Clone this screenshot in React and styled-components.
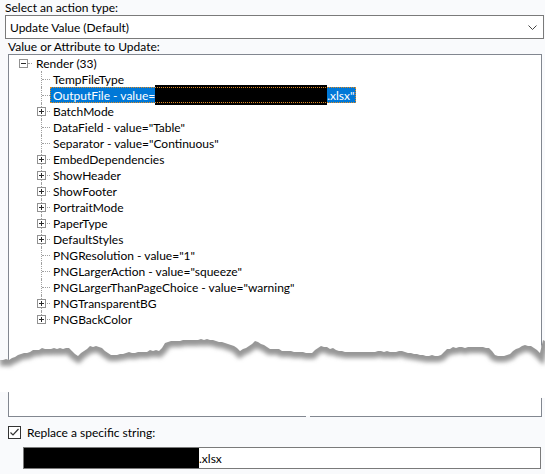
import React from 'react';
import styled, { createGlobalStyle } from 'styled-components';

const GlobalStyle = createGlobalStyle`
    html, body {
        margin: 0;
        padding: 0;
        background: #f9fafc;
    }
    body {
        font-family: Lato, "Noto Sans", sans-serif;
        font-size: 12px;
        color: #000;
    }
`;

const children = [
    { label: 'TempFileType' },
    { label: 'OutputFile - value=', selected: true, redacted: true },
    { label: 'BatchMode', expandable: true },
    { label: 'DataField - value="Table"' },
    { label: 'Separator - value="Continuous"' },
    { label: 'EmbedDependencies', expandable: true },
    { label: 'ShowHeader', expandable: true },
    { label: 'ShowFooter', expandable: true },
    { label: 'PortraitMode', expandable: true },
    { label: 'PaperType', expandable: true },
    { label: 'DefaultStyles', expandable: true },
    { label: 'PNGResolution - value="1"' },
    { label: 'PNGLargerAction - value="squeeze"' },
    { label: 'PNGLargerThanPageChoice - value="warning"' },
    { label: 'PNGTransparentBG', expandable: true },
    { label: 'PNGBackColor', expandable: true },
];

// rough outline of the torn edge, page coordinates
const tearKeys = [
    [0, 360], [10, 359], [25, 353], [40, 349], [70, 348], [77, 356], [90, 346],
    [100, 347], [110, 355], [130, 353], [160, 350], [167, 342], [200, 339],
    [229, 344], [240, 351], [257, 341], [271, 349], [312, 353], [320, 346],
    [347, 352], [365, 352], [400, 351], [420, 355], [440, 356], [448, 348],
    [470, 347], [490, 348], [495, 355], [505, 357], [515, 350], [525, 345],
    [535, 348], [540, 352], [542, 341], [545, 341],
];

const TEAR_TOP = 330;

const noise = x => {
    const s = Math.sin(x * 12.9898 + 4.1) * 43758.5453;
    return s - Math.floor(s);
};

const tearY = x => {
    for (let i = 0; i < tearKeys.length - 1; i++) {
        const [x0, y0] = tearKeys[i];
        const [x1, y1] = tearKeys[i + 1];
        if (x >= x0 && x <= x1) {
            const t = (x - x0) / (x1 - x0 || 1);
            return y0 + (y1 - y0) * t;
        }
    }
    return tearKeys[tearKeys.length - 1][1];
};

const buildEdge = () => {
    const pts = [];
    for (let x = 0; x <= 545; x += 3) {
        const y = Math.round(tearY(x) + (noise(x) - 0.5) * 1.6) - TEAR_TOP;
        pts.push(`${x},${y}`);
    }
    pts.push(`545,${tearY(545) - TEAR_TOP}`);
    return pts;
};

const edgePts = buildEdge();
const edgeLine = 'M' + edgePts.join(' L');
const tearShape = edgeLine + ' L545,68 L0,62 Z';

const Expander = ({ open }) => (
    <ExpanderBox width="9" height="9" viewBox="0 0 9 9">
        <rect x="0.5" y="0.5" width="8" height="8" fill="#fff" stroke="#919191" />
        <line x1="2" y1="4.5" x2="7" y2="4.5" stroke="#2b2b2b" />
        {!open && <line x1="4.5" y1="2" x2="4.5" y2="7" stroke="#2b2b2b" />}
    </ExpanderBox>
);

const Tear = () => (
    <TearArt width="545" height="75" viewBox="0 0 545 75">
        <defs>
            <clipPath id="tearClip">
                <path d={tearShape} />
            </clipPath>
            <filter id="tearBlur" filterUnits="userSpaceOnUse" x="-10" y="-10" width="565" height="95">
                <feGaussianBlur stdDeviation="2.2" />
            </filter>
        </defs>
        <path d={tearShape} fill="#fff" />
        <g clipPath="url(#tearClip)">
            <path d={edgeLine} fill="none" stroke="#979797" strokeWidth="12" filter="url(#tearBlur)" />
        </g>
    </TearArt>
);

const App = () => {
    return (
        <Page>
            <GlobalStyle />
            <Label>Select an action type:</Label>
            <Select>
                <span>Update Value (Default)</span>
                <svg width="9" height="6" viewBox="0 0 9 6">
                    <polyline points="0.5,0.5 4.5,4.5 8.5,0.5" fill="none" stroke="#444" />
                </svg>
            </Select>
            <Label $indent={8}>Value or Attribute to Update:</Label>
            <TreeBox>
                <RootRow>
                    <Expander open />
                    <RootStub />
                    <ItemText>Render (33)</ItemText>
                </RootRow>
                {children.map((c, i) => (
                    <ChildRow key={c.label}>
                        <Connector $last={i === children.length - 1}>
                            {c.expandable && <Expander />}
                        </Connector>
                        <ItemText $selected={c.selected}>
                            {c.label}
                            {c.redacted && (
                                <>
                                    <Redacted $width={172} />
                                    .xlsx"
                                </>
                            )}
                        </ItemText>
                    </ChildRow>
                ))}
                <BorderGap />
            </TreeBox>
            <CheckRow>
                <CheckBox width="13" height="13" viewBox="0 0 13 13">
                    <rect x="0.5" y="0.5" width="12" height="12" fill="#fff" stroke="#333" />
                    <polyline points="2.5,6.5 5,9 10.5,3" fill="none" stroke="#333" strokeWidth="1.2" />
                </CheckBox>
                <span>Replace a specific string:</span>
            </CheckRow>
            <TextInput>
                <Redacted $width={175} />
                <span>.xlsx</span>
            </TextInput>
            <Tear />
        </Page>
    );
};

const Page = styled.div`
    position: relative;
    width: 545px;
    height: 474px;
    overflow: hidden;
    display: flex;
    flex-direction: column;
`;

const Label = styled.div`
    height: 15px;
    line-height: 15px;
    padding-left: ${p => p.$indent || 5}px;
    white-space: nowrap;
`;

const Select = styled.div`
    box-sizing: border-box;
    margin-left: 5px;
    width: 539px;
    height: 24px;
    border: 1px solid #7a7a7a;
    background: #fff;
    display: flex;
    align-items: center;
    justify-content: space-between;
    padding: 0 6px 0 4px;

    svg {
        margin-top: 1px;
    }
`;

const TreeBox = styled.div`
    position: relative;
    box-sizing: border-box;
    margin-left: 8px;
    width: 534px;
    height: 363px;
    border: 1px solid #828790;
    background: #fff;
    display: flex;
    flex-direction: column;
`;

// small break in the bottom edge left by the cut
const BorderGap = styled.span`
    position: absolute;
    left: 297px;
    bottom: -1px;
    width: 4px;
    height: 1px;
    background: #f9fafc;
`;

const RootRow = styled.div`
    height: 16px;
    display: flex;
    align-items: center;
    padding-left: 10px;
`;

const RootStub = styled.span`
    width: 4px;
    height: 0;
    margin: 0 1px 0 0;
    border-top: 1px dotted #a0a0a0;
`;

const ChildRow = styled.div`
    height: 16px;
    display: flex;
    align-items: center;
    padding-left: 32px;
`;

const Connector = styled.span`
    position: relative;
    width: 9px;
    height: 16px;
    flex: none;

    &::before {
        content: '';
        position: absolute;
        left: 0;
        top: 0;
        height: ${p => (p.$last ? 8 : 16)}px;
        border-left: 1px dotted #a0a0a0;
    }

    &::after {
        content: '';
        position: absolute;
        left: 1px;
        top: 8px;
        width: 8px;
        border-top: 1px dotted #a0a0a0;
    }

    svg {
        position: absolute;
        left: -4px;
        top: 4px;
        z-index: 1;
    }
`;

const ExpanderBox = styled.svg`
    display: block;
    flex: none;
`;

const ItemText = styled.span`
    display: flex;
    align-items: center;
    height: 16px;
    box-sizing: border-box;
    padding: 0 2px 0 3px;
    white-space: nowrap;
    color: ${p => (p.$selected ? '#fff' : '#000')};
    background: ${p => (p.$selected ? '#0078d7' : 'transparent')};
    outline: ${p => (p.$selected ? '1px dotted #e08a20' : 'none')};
    outline-offset: -1px;
`;

const Redacted = styled.span`
    display: inline-block;
    width: ${p => p.$width}px;
    height: 20px;
    background: #000;
    flex: none;
`;

const CheckRow = styled.div`
    margin-top: 9px;
    height: 13px;
    display: flex;
    align-items: center;
    gap: 6px;
    padding-left: 8px;
`;

const CheckBox = styled.svg`
    display: block;
`;

const TextInput = styled.div`
    box-sizing: border-box;
    margin: 8px 0 0 23px;
    width: 518px;
    height: 22px;
    border: 1px solid #7a7a7a;
    background: #fff;
    display: flex;
    align-items: center;
`;

const TearArt = styled.svg`
    position: absolute;
    left: 0;
    top: ${TEAR_TOP}px;
    pointer-events: none;
`;

export default App;
